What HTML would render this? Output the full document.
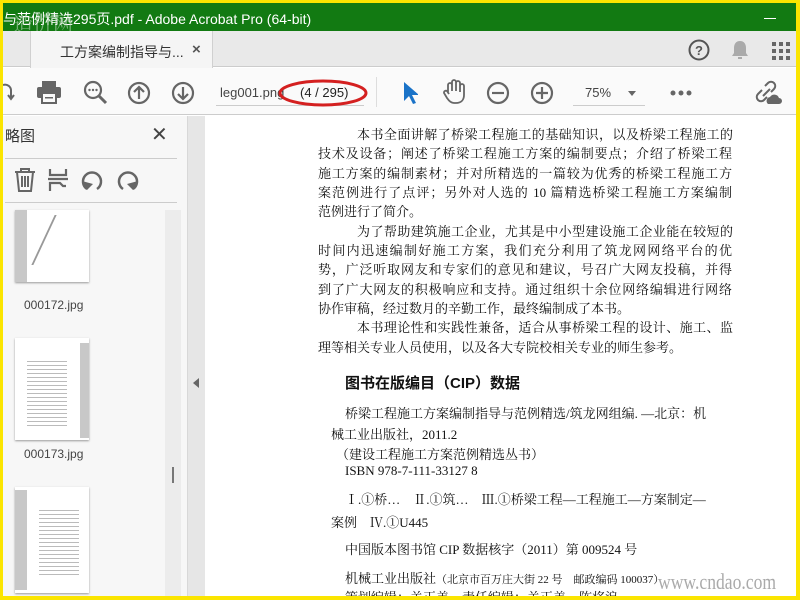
<!DOCTYPE html>
<html><head><meta charset="utf-8"><style>
*{margin:0;padding:0;box-sizing:border-box}
body{width:800px;height:600px;overflow:hidden;background:#fbe500;position:relative;font-family:"Liberation Sans","Noto Sans CJK SC",sans-serif}
.a{position:absolute}
#win{position:absolute;left:3px;top:3px;width:793px;height:593px;background:#fff;overflow:hidden}
.t{position:absolute;font-family:"Liberation Serif","Noto Serif CJK SC",serif;font-size:13px;color:#111;white-space:nowrap}
.j{width:414px;text-align:justify;text-align-last:justify}
svg{position:absolute}
</style></head><body>
<div id="win">
<div class="a" style="left:0;top:0;width:793px;height:28px;background:#127a12"></div>
<div class="a" style="left:0;top:6px;color:#fff;font-size:14px;white-space:nowrap">与范例精选295页.pdf - Adobe Acrobat Pro (64-bit)</div>
<div class="a" style="left:10px;top:5px;color:rgba(200,220,200,.55);font-size:20px;font-family:'Noto Serif CJK SC',serif">造价网</div>
<div class="a" style="left:761px;top:15px;width:12px;height:1px;background:#fff"></div>
<div class="a" style="left:0;top:28px;width:793px;height:36px;background:#e9e9e9;border-bottom:1px solid #ccc"></div>
<div class="a" style="left:27px;top:28px;width:183px;height:37px;background:#f5f5f5;border-left:1px solid #d0d0d0;border-right:1px solid #d0d0d0"></div>
<div class="a" style="left:57px;top:39px;font-size:14px;color:#333">工方案编制指导与...</div>
<div class="a" style="left:189px;top:38px;font-size:15px;color:#555;font-weight:bold">×</div>
<svg style="left:685px;top:36px" width="22" height="22"><circle cx="11" cy="11" r="9.5" fill="none" stroke="#555" stroke-width="2"/><text x="11" y="16" text-anchor="middle" font-size="13" font-weight="bold" fill="#555" font-family="Liberation Sans">?</text></svg>
<svg style="left:728px;top:37px" width="18" height="21"><path d="M9 1c-4 0-6 3-6 7v5l-2 3h16l-2-3V8c0-4-2-7-6-7z" fill="#aaa"/><rect x="7" y="17" width="4" height="2" fill="#aaa"/></svg>
<svg style="left:769px;top:39px" width="20" height="20" fill="#666"><rect x="0" y="0" width="4" height="4"/><rect x="7" y="0" width="4" height="4"/><rect x="14" y="0" width="4" height="4"/><rect x="0" y="7" width="4" height="4"/><rect x="7" y="7" width="4" height="4"/><rect x="14" y="7" width="4" height="4"/><rect x="0" y="14" width="4" height="4"/><rect x="7" y="14" width="4" height="4"/><rect x="14" y="14" width="4" height="4"/></svg>
<div class="a" style="left:0;top:65px;width:793px;height:47px;background:#fafafa;border-bottom:1px solid #ccc"></div>
<svg style="left:0;top:78px" width="14" height="22"><path d="M0 4a6 6 0 0 1 8 6v8M5 14l3 4 3-4" fill="none" stroke="#666" stroke-width="2"/></svg>
<svg style="left:33px;top:77px" width="26" height="24"><rect x="6" y="1" width="14" height="6" fill="#666"/><rect x="1" y="7" width="24" height="11" rx="2" fill="#666"/><rect x="6" y="13" width="14" height="10" fill="#fafafa" stroke="#666" stroke-width="2"/><rect x="9" y="17" width="8" height="1.5" fill="#666"/></svg>
<svg style="left:80px;top:77px" width="26" height="26"><circle cx="10" cy="10" r="8" fill="none" stroke="#666" stroke-width="2.2"/><path d="M16 16l7 7" stroke="#666" stroke-width="3"/><circle cx="6.5" cy="10" r="1.2" fill="#666"/><circle cx="10" cy="10" r="1.2" fill="#666"/><circle cx="13.5" cy="10" r="1.2" fill="#666"/></svg>
<svg style="left:124px;top:78px" width="24" height="24"><circle cx="12" cy="12" r="10" fill="none" stroke="#666" stroke-width="2.2"/><path d="M12 18V6M7 11l5-5 5 5" fill="none" stroke="#666" stroke-width="2.2"/></svg>
<svg style="left:168px;top:78px" width="24" height="24"><circle cx="12" cy="12" r="10" fill="none" stroke="#666" stroke-width="2.2"/><path d="M12 6v12M7 13l5 5 5-5" fill="none" stroke="#666" stroke-width="2.2"/></svg>
<div class="a" style="left:213px;top:82px;width:148px;height:21px;border-bottom:1px solid #ccc"></div>
<div class="a" style="left:217px;top:82px;font-size:13px;color:#444">leg001.png</div>
<div class="a" style="left:297px;top:82px;font-size:13px;color:#222;background:#fafafa">(4 / 295)</div>
<svg style="left:274px;top:74px" width="92" height="34"><ellipse cx="46" cy="16" rx="43" ry="12" fill="none" stroke="#d42020" stroke-width="3"/></svg>
<div class="a" style="left:373px;top:74px;width:1px;height:30px;background:#ddd"></div>
<svg style="left:399px;top:78px" width="16" height="24"><path d="M2 1v19l5-5 4 8 3-1-4-8h7z" fill="#1a73c8"/></svg>
<svg style="left:439px;top:76px" width="24" height="26"><path d="M6 13V6a2 2 0 0 1 4 0v6V3a2 2 0 0 1 4 0v9V4a2 2 0 0 1 4 0v9V7a2 2 0 0 1 4 0v9c0 5-3 8-8 8h-2c-3 0-5-2-7-5l-3-5a2 2 0 0 1 3-2l2 3" fill="none" stroke="#666" stroke-width="1.8"/></svg>
<svg style="left:483px;top:78px" width="24" height="24"><circle cx="12" cy="12" r="10" fill="none" stroke="#666" stroke-width="2.2"/><path d="M6 12h12" stroke="#666" stroke-width="2.2"/></svg>
<svg style="left:527px;top:78px" width="24" height="24"><circle cx="12" cy="12" r="10" fill="none" stroke="#666" stroke-width="2.2"/><path d="M6 12h12M12 6v12" stroke="#666" stroke-width="2.2"/></svg>
<div class="a" style="left:570px;top:83px;width:72px;height:20px;border-bottom:1px solid #ccc"></div>
<div class="a" style="left:582px;top:82px;font-size:13px;color:#444">75%</div>
<div class="a" style="left:625px;top:88px;border:4px solid transparent;border-top:5px solid #666"></div>
<svg style="left:667px;top:87px" width="22" height="6" fill="#666"><circle cx="3" cy="3" r="2.5"/><circle cx="11" cy="3" r="2.5"/><circle cx="19" cy="3" r="2.5"/></svg>
<svg style="left:751px;top:77px" width="28" height="26"><path d="M11 6l3-3a4 4 0 0 1 6 6l-3 3M8 10l-4 4a4 4 0 0 0 6 6l3-3M9 16l7-7" fill="none" stroke="#666" stroke-width="2"/><path d="M14 24a4 4 0 0 1 2-7 5 5 0 0 1 9 1 3 3 0 0 1 0 6z" fill="#666"/></svg>
<div class="a" style="left:0;top:113px;width:184px;height:480px;background:#f7f7f7"></div>
<div class="a" style="left:2px;top:122px;font-size:15px;color:#333">略图</div>
<div class="a" style="left:148px;top:119px;font-size:20px;color:#444">✕</div>
<div class="a" style="left:2px;top:155px;width:172px;height:1px;background:#ccc"></div>
<svg style="left:11px;top:165px" width="22" height="24"><path d="M1 4h20M7 4V1h8v3M3 4l2 19h12l2-19M8 8v11M11 8v11M14 8v11" fill="none" stroke="#666" stroke-width="2"/></svg>
<svg style="left:44px;top:165px" width="22" height="24"><path d="M3 1v6h16V1M1 11h20M3 23v-8h10l3 3h3" fill="none" stroke="#666" stroke-width="2.2"/></svg>
<svg style="left:78px;top:166px" width="24" height="22"><path d="M6 20a9 9 0 1 1 10 0" fill="none" stroke="#666" stroke-width="2.5"/><path d="M1 12l5 9 6-6z" fill="#666"/></svg>
<svg style="left:112px;top:166px" width="24" height="22"><path d="M8 20a9 9 0 1 1 10 0" fill="none" stroke="#666" stroke-width="2.5"/><path d="M23 12l-5 9-6-6z" fill="#666"/></svg>
<div class="a" style="left:2px;top:199px;width:172px;height:1px;background:#ccc"></div>
<div class="a" style="left:162px;top:207px;width:16px;height:386px;background:#ececec"></div>
<div class="a" style="left:169px;top:464px;width:2px;height:16px;background:#777"></div>
<div class="a" style="left:12px;top:207px;width:74px;height:72px;background:#fff;box-shadow:0 1px 2px #999"><div style="position:absolute;left:0;top:0;width:12px;height:72px;background:#c8c8c8"></div><div style="position:absolute;left:28px;top:5px;width:30px;height:50px;border-left:2px solid #999;transform:skewX(-25deg)"></div></div>
<div class="a" style="left:21px;top:295px;font-size:12px;color:#444">000172.jpg</div>
<div class="a" style="left:12px;top:335px;width:74px;height:102px;background:#fff;box-shadow:0 1px 2px #999"><div style="position:absolute;right:0;top:5px;width:9px;height:95px;background:#c8c8c8"></div><div style="position:absolute;left:12px;top:20px;width:40px;height:70px;background:repeating-linear-gradient(#fff 0 3px,#bbb 3px 4px)"></div></div>
<div class="a" style="left:21px;top:444px;font-size:12px;color:#444">000173.jpg</div>
<div class="a" style="left:12px;top:484px;width:74px;height:106px;background:#fff;box-shadow:0 1px 2px #999"><div style="position:absolute;left:0;top:3px;width:12px;height:100px;background:#c8c8c8"></div><div style="position:absolute;left:24px;top:20px;width:40px;height:70px;background:repeating-linear-gradient(#fff 0 3px,#bbb 3px 4px)"></div></div>
<div class="a" style="left:184px;top:113px;width:18px;height:480px;background:#e6e6e6;border-left:1px solid #d8d8d8"></div>
<div class="a" style="left:190px;top:375px;border:5px solid transparent;border-right:6px solid #666;border-left:0"></div>
<div class="t" style="left:354px;top:121px;width:376px;text-align:justify;text-align-last:justify">本书全面讲解了桥梁工程施工的基础知识，以及桥梁工程施工的</div>
<div class="t j" style="left:315px;top:140px">技术及设备；阐述了桥梁工程施工方案的编制要点；介绍了桥梁工程</div>
<div class="t j" style="left:315px;top:160px">施工方案的编制素材；并对所精选的一篇较为优秀的桥梁工程施工方</div>
<div class="t j" style="left:315px;top:179px">案范例进行了点评；另外对人选的 10 篇精选桥梁工程施工方案编制</div>
<div class="t" style="left:315px;top:198px">范例进行了简介。</div>
<div class="t" style="left:354px;top:218px;width:376px;text-align:justify;text-align-last:justify">为了帮助建筑施工企业，尤其是中小型建设施工企业能在较短的</div>
<div class="t j" style="left:315px;top:237px">时间内迅速编制好施工方案，我们充分利用了筑龙网网络平台的优</div>
<div class="t j" style="left:315px;top:256px">势，广泛听取网友和专家们的意见和建议，号召广大网友投稿，并得</div>
<div class="t j" style="left:315px;top:276px">到了广大网友的积极响应和支持。通过组织十余位网络编辑进行网络</div>
<div class="t" style="left:315px;top:295px">协作审稿，经过数月的辛勤工作，最终编制成了本书。</div>
<div class="t" style="left:354px;top:314px;width:376px;text-align:justify;text-align-last:justify">本书理论性和实践性兼备，适合从事桥梁工程的设计、施工、监</div>
<div class="t" style="left:315px;top:334px">理等相关专业人员使用，以及各大专院校相关专业的师生参考。</div>
<div class="t" style="left:342px;top:369px;font-size:15px;font-weight:bold;font-family:'Liberation Sans','Noto Sans CJK SC',sans-serif">图书在版编目（CIP）数据</div>
<div class="t" style="left:342px;top:400px">桥梁工程施工方案编制指导与范例精选/筑龙网组编. —北京：机</div>
<div class="t" style="left:328px;top:421px">械工业出版社，2011.2</div>
<div class="t" style="left:333px;top:441px">（建设工程施工方案范例精选丛书）</div>
<div class="t" style="left:342px;top:460px">ISBN 978-7-111-33127 8</div>
<div class="t" style="left:342px;top:486px">Ⅰ.①桥…　Ⅱ.①筑…　Ⅲ.①桥梁工程—工程施工—方案制定—</div>
<div class="t" style="left:328px;top:509px">案例　Ⅳ.①U445</div>
<div class="t" style="left:342px;top:536px">中国版本图书馆 CIP 数据核字（2011）第 009524 号</div>
<div class="t" style="left:342px;top:565px">机械工业出版社<span style="font-size:11px">（北京市百万庄大街 22 号　邮政编码 100037）</span></div>
<div class="t" style="left:342px;top:584px">策划编辑：关正美　责任编辑：关正美　陈将浪</div>
<div class="a" style="left:655px;top:566px;font-size:22px;color:#aaa;font-family:'Liberation Serif',serif;transform:scaleX(.8);transform-origin:left">www.cndao.com</div>
</div>
</body></html>
